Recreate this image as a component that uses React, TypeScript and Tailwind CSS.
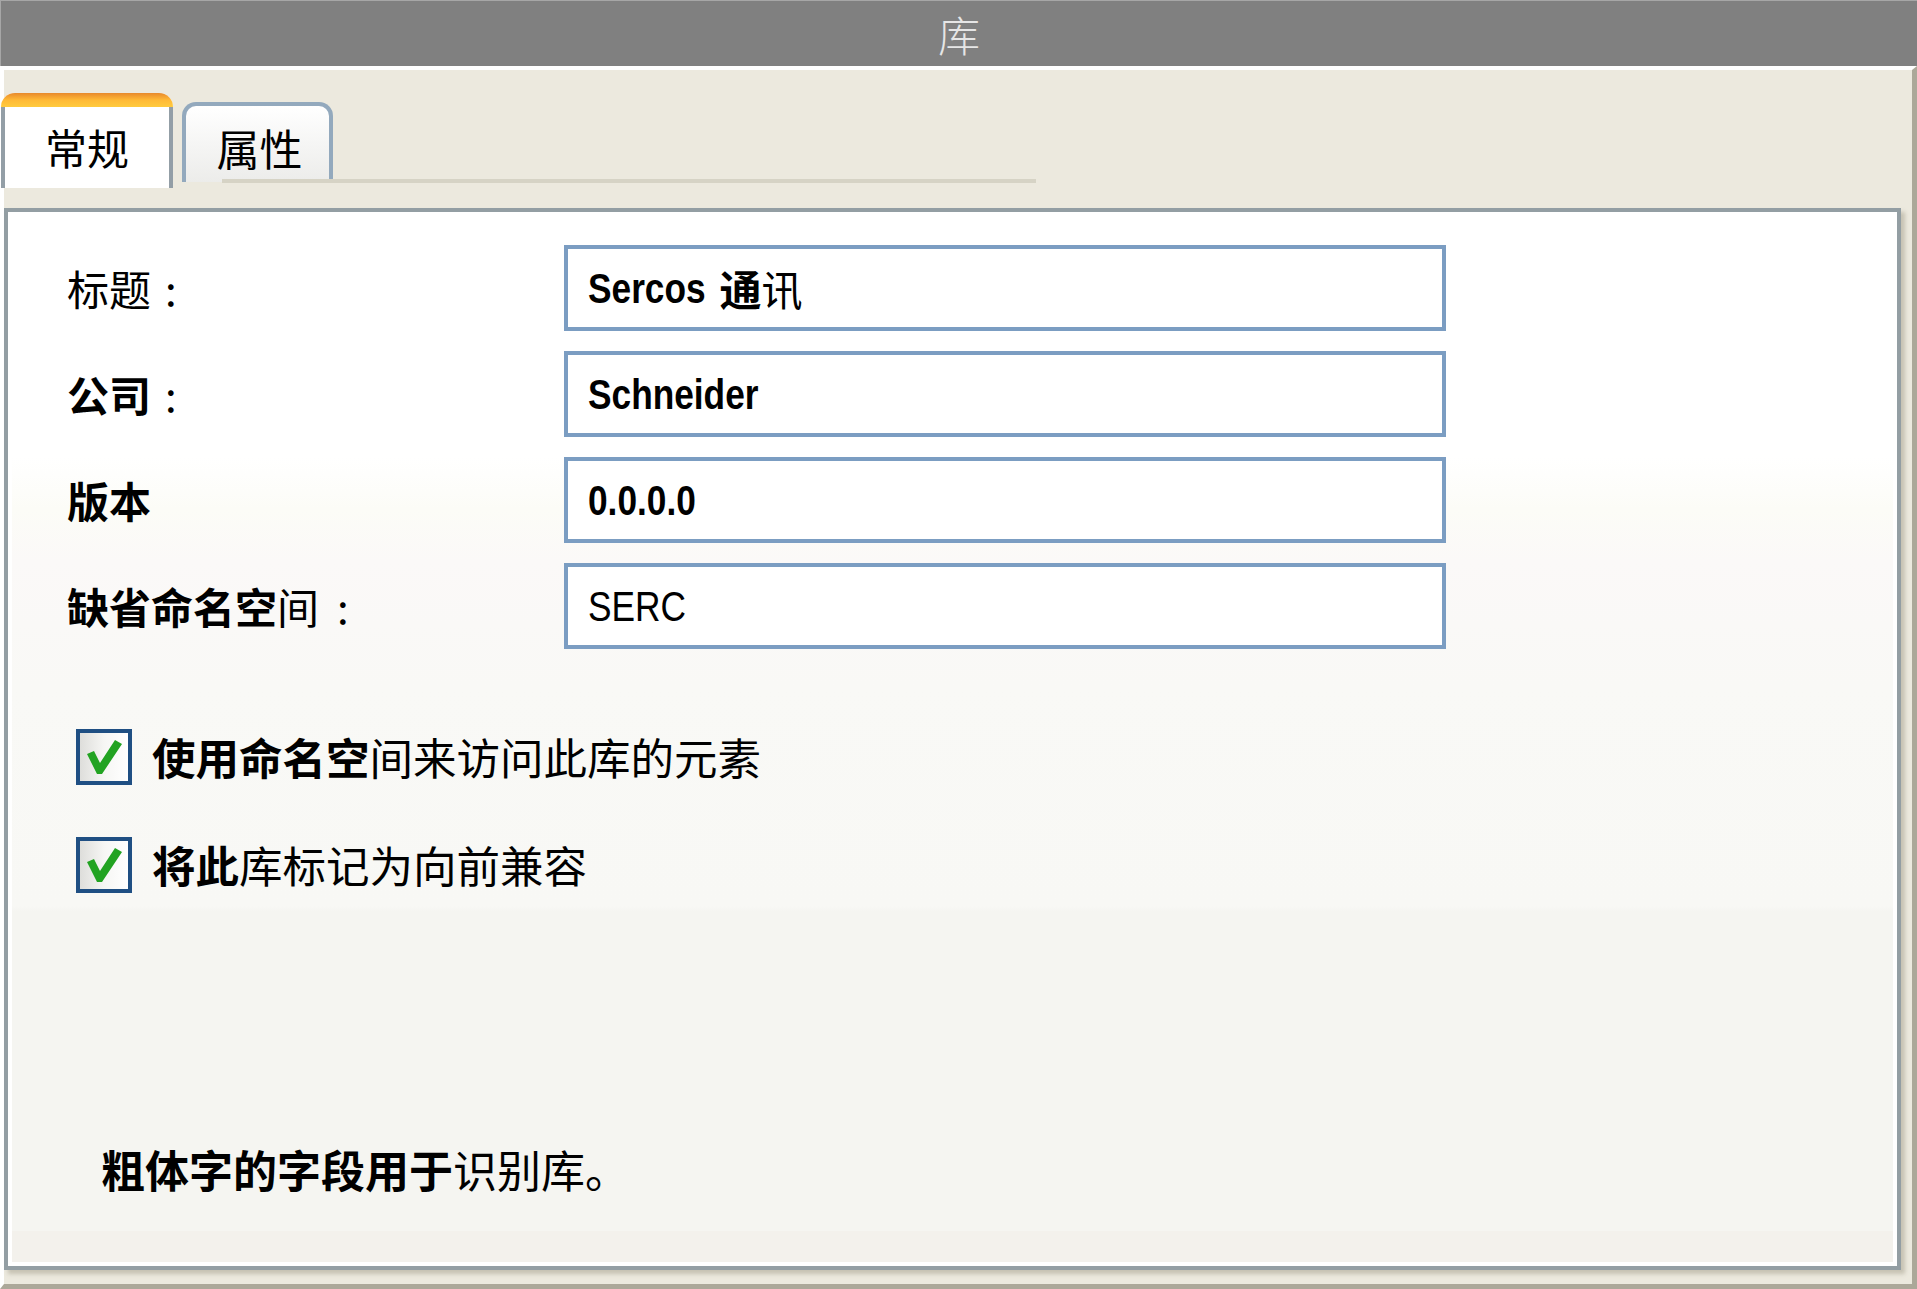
import React from 'react';

function Check() {
  return (
    <div className="w-[56px] h-[56px] shrink-0 border-[4px] border-[#1f4f83] bg-gradient-to-r from-[#dededb] via-[#f6f6f4] to-white">
      <svg viewBox="0 0 48 48" className="w-full h-full">
        <polygon points="7,21 14,18 20,30 35,7 42,11 22,41 17,41" fill="#22a322" />
      </svg>
    </div>
  );
}

function Field({ children }: { children: React.ReactNode }) {
  return (
    <div className="h-[86px] border-[4px] border-[#7b9dc2] bg-white flex items-center pl-[20px] text-[43px] leading-none font-['Liberation_Sans','Noto_Sans_CJK_SC',sans-serif]">
      {children}
    </div>
  );
}

// narrow latin text (arial narrow look)
function Narrow({ children, bold, shift }: { children: React.ReactNode; bold?: boolean; shift: string }) {
  return (
    <span className={`inline-block origin-left scale-x-[0.82] whitespace-pre ${bold ? 'font-bold' : ''} ${shift}`}>
      {children}
    </span>
  );
}

export default function App() {
  return (
    <div className="w-[1917px] h-[1289px] overflow-hidden bg-[#ece9de] flex flex-col text-black font-['Noto_Sans_CJK_SC',sans-serif]">
      {/* title bar */}
      <div className="h-[66px] shrink-0 bg-[#808080] border-t border-l border-[#a6a6a6] flex items-center justify-center">
        <span className="text-[42px] leading-none text-[#e6e6e6] font-light">库</span>
      </div>

      <div className="flex-1 flex flex-col border-t-[4px] border-l-[4px] border-r-[5px] border-b-[5px] border-t-white border-l-white border-r-[#aca899] border-b-[#aca899]">
        {/* tabs */}
        <div className="relative h-[118px] shrink-0 flex items-end -ml-[3px]">
          <div className="w-[172px] h-[95px] rounded-t-[14px] overflow-hidden bg-white flex flex-col">
            <div className="h-[14px] bg-gradient-to-b from-[#e7892c] via-[#ffb936] to-[#ffcb3e]" />
            <div className="flex-1 border-x-[4px] border-[#939ea6] flex items-center justify-center text-[42px] leading-none pb-[2px]">
              常规
            </div>
          </div>
          <div className="ml-[9px] mb-[6px] w-[151px] h-[80px] rounded-t-[14px] border-[4px] border-b-0 border-[#93a9bd] bg-gradient-to-b from-white to-[#ececea] flex items-center justify-center text-[43px] leading-none pt-[6px] pl-[4px]">
            属性
          </div>
          <div className="absolute left-[221px] top-[109px] w-[814px] h-[4px] bg-[#d6d3c5]" />
        </div>

        <div className="h-[20px] shrink-0" />

        {/* panel */}
        <div className="w-[1897px] h-[1062px] shrink-0 border-[4px] border-[#939ea3] bg-white p-[4px] shadow-[4px_4px_4px_rgba(130,124,100,0.35)]">
          <div className="h-full flex flex-col bg-[linear-gradient(to_bottom,#ffffff_0%,#ffffff_23%,#fcfcf7_28%,#fbf9f8_33%,#f9f9f6_45%,#f8f8f5_66%,#f5f5f1_66.5%,#f5f5f1_97%,#f3f1ec_97%,#f3f1ec_100%)]">
            <div className="mt-[29px] pl-[55px] grid grid-cols-[497px_882px] gap-y-[20px] items-center text-[42px] leading-none">
              <div>
                标题<span className="ml-[14px]">:</span>
              </div>
              <Field>
                <Narrow bold shift="-mr-[26px]">Sercos</Narrow>
                <span className="font-bold font-['Noto_Sans_CJK_SC',sans-serif] ml-[14px] text-[42px]">通</span>
                <span className="font-['Noto_Sans_CJK_SC',sans-serif] text-[41px]">讯</span>
              </Field>

              <div>
                <span className="font-bold">公司</span>
                <span className="ml-[14px]">:</span>
              </div>
              <Field>
                <Narrow bold shift="">Schneider</Narrow>
              </Field>

              <div className="font-bold">版本</div>
              <Field>
                <Narrow bold shift="">0.0.0.0</Narrow>
              </Field>

              <div>
                <span className="font-bold">缺省命名空</span>
                <span>间</span>
                <span className="ml-[18px]">:</span>
              </div>
              <Field>
                <Narrow shift="">SERC</Narrow>
              </Field>
            </div>

            <div className="mt-[80px] pl-[64px] flex flex-col gap-[52px] text-[43.5px] leading-none">
              <div className="flex items-center gap-[20px]">
                <Check />
                <div>
                  <span className="font-bold">使用命名空</span>
                  <span>间来访问此库的元素</span>
                </div>
              </div>
              <div className="flex items-center gap-[20px]">
                <Check />
                <div>
                  <span className="font-bold">将此</span>
                  <span>库标记为向前兼容</span>
                </div>
              </div>
            </div>

            <div className="mt-auto mb-[68px] pl-[89px] text-[44px] leading-[50px]">
              <span className="font-bold">粗体字的字段用于</span>
              <span>识别库。</span>
            </div>
          </div>
        </div>
      </div>
    </div>
  );
}
